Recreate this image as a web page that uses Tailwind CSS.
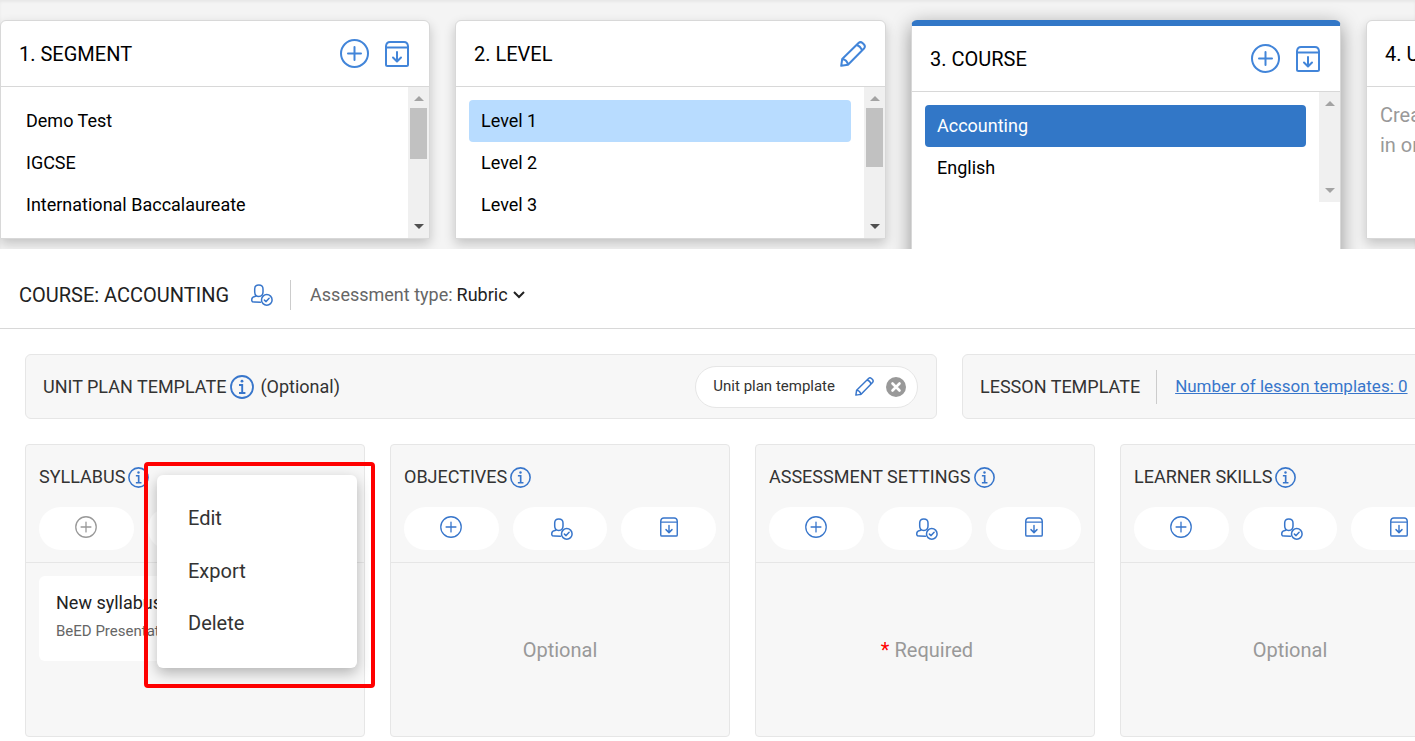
<!DOCTYPE html>
<html lang="en">
<head>
<meta charset="utf-8">
<title>Course: Accounting</title>
<script src="https://cdn.jsdelivr.net/npm/@tailwindcss/browser@4"></script>
</head>
<body class="min-h-screen overflow-x-hidden bg-white font-['Roboto',sans-serif] text-black">
<svg class="hidden" aria-hidden="true">
  <symbol id="plus" viewBox="0 0 29 29"><g fill="none" stroke="currentColor" stroke-linecap="round"><circle cx="14.5" cy="14.5" r="13.5"/><path d="M14.5 8v13M8 14.5h13"/></g></symbol>
  <symbol id="archive" viewBox="0 0 24 26"><g fill="none" stroke="currentColor" stroke-linecap="round" stroke-linejoin="round"><path d="M1 6.5V23.5Q1 25 2.5 25H21.5Q23 25 23 23.5V6.5ZM1 6.5V5Q1.500 1 5 1H19Q22.500 1 23 5V6.5"/><path d="M12 11v9M8 16.500l4 4 4-4"/></g></symbol>
  <symbol id="pencil" viewBox="0 0 26 26"><g fill="none" stroke="currentColor" stroke-linecap="round" stroke-linejoin="round"><path d="M1.200 24.800L2.200 18 18.500 2Q20.500.2 22.500 2L24 3.500Q25.700 5.500 24 7.500L8 23.800ZM2.200 18Q7 18.500 8 23.800M16.500 4Q20.500 5 22 9.500"/></g></symbol>
  <symbol id="user" viewBox="0 0 22 22"><g fill="none" stroke="currentColor" stroke-width="1.500" stroke-linecap="round" stroke-linejoin="round"><path d="M7.800 1C4.900 1 3.700 2.600 3.700 5V8C3.700 10.500 5 12.400 7.800 12.400S12 10.500 12 8V5C12 2.600 10.800 1 7.800 1ZM4.800 12.200Q1 12.700.800 15V16.800Q1 18 3.500 18.100L9.500 18.300"/><circle cx="15.800" cy="15.900" r="5.300"/><path d="M13.400 16.100l1.700 1.500 3-3.300"/></g></symbol>
  <symbol id="info" viewBox="0 0 24 24"><circle cx="12" cy="12" r="11" fill="none" stroke="currentColor" stroke-width="1.800"/><path d="M9 10h3.200v7.800M9 18h6.400" fill="none" stroke="currentColor" stroke-width="1.900"/><circle cx="12" cy="6.200" r="1.400" fill="currentColor"/></symbol>
  <symbol id="up" viewBox="0 0 10 5"><path d="M0 5L5 0 10 5Z" fill="currentColor"/></symbol>
  <symbol id="down" viewBox="0 0 10 5"><path d="M0 0L5 5 10 0Z" fill="currentColor"/></symbol>
</svg>

<section class="flex h-[249px] gap-[25px] overflow-hidden bg-[#f4f4f4] pt-5 inset-shadow-[0_2px_3px_rgba(0,0,0,0.05)]">
  <article class="h-[219px] w-[430px] shrink-0 rounded-t-md border border-[#d8d8d8] bg-white shadow-[0_5px_12px_rgba(0,0,0,0.2)]">
    <header class="flex h-[66px] items-center justify-between border-b border-[#d8d8d8] pr-5 pl-[18px]">
      <h2 class="text-xl">1. SEGMENT</h2>
      <div class="flex items-center gap-4 text-[#4285d9]">
        <button aria-label="Add segment"><svg class="size-[29px] stroke-2"><use href="#plus"/></svg></button>
        <button aria-label="Import segment"><svg class="h-[26px] w-6 stroke-2"><use href="#archive"/></svg></button>
      </div>
    </header>
    <div class="flex h-[151px]">
      <ul class="flex-1 p-[13px] text-lg">
        <li class="flex h-[42px] items-center px-3">Demo Test</li>
        <li class="flex h-[42px] items-center px-3">IGCSE</li>
        <li class="flex h-[42px] items-center px-3">International Baccalaureate</li>
      </ul>
      <div class="flex w-[21px] flex-col items-center bg-[#f0f0f0] pt-[9px] pb-[9px]">
        <svg class="h-[5px] w-[10px] text-[#a3a3a3]"><use href="#up"/></svg>
        <div class="mt-[7px] h-[51px] w-[17px] bg-[#c1c1c1]"></div>
        <svg class="mt-auto h-[5px] w-[10px] text-[#505050]"><use href="#down"/></svg>
      </div>
    </div>
  </article>

  <article class="h-[219px] w-[431px] shrink-0 rounded-t-md border border-[#d8d8d8] bg-white shadow-[0_5px_12px_rgba(0,0,0,0.2)]">
    <header class="flex h-[66px] items-center justify-between border-b border-[#d8d8d8] pr-[19px] pl-[18px]">
      <h2 class="text-xl">2. LEVEL</h2>
      <button class="text-[#4285d9]" aria-label="Edit level"><svg class="size-[26px] stroke-2"><use href="#pencil"/></svg></button>
    </header>
    <div class="flex h-[151px]">
      <ul class="flex-1 p-[13px] text-lg">
        <li class="flex h-[42px] items-center rounded bg-[#b8dcff] px-3">Level 1</li>
        <li class="flex h-[42px] items-center px-3">Level 2</li>
        <li class="flex h-[42px] items-center px-3">Level 3</li>
      </ul>
      <div class="flex w-[21px] flex-col items-center bg-[#f0f0f0] pt-[9px] pb-[9px]">
        <svg class="h-[5px] w-[10px] text-[#a3a3a3]"><use href="#up"/></svg>
        <div class="mt-[7px] h-[59px] w-[17px] bg-[#c1c1c1]"></div>
        <svg class="mt-auto h-[5px] w-[10px] text-[#505050]"><use href="#down"/></svg>
      </div>
    </div>
  </article>

  <article class="h-[250px] w-[430px] shrink-0 overflow-clip rounded-t-md border-x border-t-6 border-x-[#d8d8d8] border-t-[#3277c7] bg-white shadow-[0_5px_20px_rgba(0,0,0,0.4)]">
    <header class="flex h-[66px] items-center justify-between border-b border-[#d8d8d8] pr-5 pl-[18px]">
      <h2 class="text-xl">3. COURSE</h2>
      <div class="flex items-center gap-4 text-[#4285d9]">
        <button aria-label="Add course"><svg class="size-[29px] stroke-2"><use href="#plus"/></svg></button>
        <button aria-label="Import course"><svg class="h-[26px] w-6 stroke-2"><use href="#archive"/></svg></button>
      </div>
    </header>
    <div class="flex h-[110px]">
      <ul class="flex-1 p-[13px] text-lg">
        <li class="flex h-[42px] items-center rounded bg-[#3277c7] px-3 text-white">Accounting</li>
        <li class="flex h-[42px] items-center px-3">English</li>
      </ul>
      <div class="flex w-[21px] flex-col items-center justify-between bg-[#f0f0f0] py-[9px] text-[#a3a3a3]">
        <svg class="h-[5px] w-[10px]"><use href="#up"/></svg>
        <svg class="h-[5px] w-[10px]"><use href="#down"/></svg>
      </div>
    </div>
  </article>

  <article class="h-[219px] w-[430px] shrink-0 rounded-t-md border border-[#d8d8d8] bg-white shadow-[0_5px_12px_rgba(0,0,0,0.2)]">
    <header class="flex h-[66px] items-center border-b border-[#d8d8d8] px-[18px]"><h2 class="text-xl">4. UNIT</h2></header>
    <p class="p-[13px] text-xl leading-[30px] text-[#999]">Create a course<br>in order</p>
  </article>
</section>

<header class="flex h-20 items-center border-b border-[#d8d8d8] pt-3 pl-[19px]">
  <h1 class="text-xl text-[#222]">COURSE: ACCOUNTING</h1>
  <button class="ml-[22px] text-[#3876cb]" aria-label="Course users"><svg class="size-[22px]"><use href="#user"/></svg></button>
  <span class="ml-[17px] h-[30px] w-px bg-[#ccc]"></span>
  <label for="atype" class="ml-[19px] text-lg text-[#666]">Assessment type:</label>
  <div class="relative ml-1 flex items-center">
    <select id="atype" class="w-[68px] appearance-none bg-transparent text-lg text-[#222]"><option>Rubric</option></select>
    <svg class="pointer-events-none absolute right-0 h-[8px] w-3 text-[#222]" viewBox="0 0 12 8" fill="none" stroke="currentColor" stroke-width="2"><path d="M1 1l5 5 5-5"/></svg>
  </div>
</header>

<main class="overflow-hidden py-[25px] pl-[25px] text-[#333]">
  <div class="flex gap-[25px]">
    <section class="flex h-[65px] w-[912px] shrink-0 items-center rounded-md border border-[#e6e6e6] bg-[#f7f7f7] pr-[18px] pl-[17px] text-lg">
      <h2>UNIT PLAN TEMPLATE</h2>
      <button class="ml-1 text-[#3876cb]" aria-label="About unit plan templates"><svg class="size-6"><use href="#info"/></svg></button>
      <span class="ml-[6px]">(Optional)</span>
      <div class="ml-auto flex h-[42px] items-center rounded-full border border-[#e6e6e6] bg-white pr-[11px] pl-[17px]">
        <span class="text-[15px]">Unit plan template</span>
        <button class="ml-5 text-[#3876cb]" aria-label="Edit template"><svg class="size-[19px]" stroke-width="2"><use href="#pencil"/></svg></button>
        <button class="ml-3" aria-label="Remove template"><svg class="size-5" viewBox="0 0 20 20"><circle cx="10" cy="10" r="10" fill="#999"/><path d="M6.500 6.500l7 7M13.500 6.500l-7 7" stroke="#fff" stroke-width="2.600" stroke-linecap="round"/></svg></button>
      </div>
    </section>
    <section class="flex h-[65px] w-[912px] shrink-0 items-center rounded-md border border-[#e6e6e6] bg-[#f7f7f7] px-[17px] text-lg">
      <h2>LESSON TEMPLATE</h2>
      <span class="mr-[18px] ml-4 h-[34px] w-px bg-[#ccc]"></span>
      <a href="#lessons" class="text-[17px] text-[#3876cb] underline">Number of lesson templates: 0</a>
    </section>
  </div>

  <div class="mt-[25px] flex gap-[25px]">
    <section class="relative flex h-[293px] w-[340px] shrink-0 flex-col rounded border border-[#e6e6e6] bg-[#f7f7f7]">
      <header class="h-[118px] border-b border-[#e6e6e6] px-[13px] pt-[18px]">
        <div class="flex h-7 items-center gap-[3px]"><h3 class="text-lg">SYLLABUS</h3><button class="text-[#3876cb]" aria-label="About syllabus"><svg class="size-[21px]"><use href="#info"/></svg></button></div>
        <div class="mt-4 grid grid-cols-3 gap-[14px]">
          <button class="flex h-[43px] items-center justify-center rounded-full bg-white pb-1 text-[#999]" aria-label="Add syllabus"><svg class="size-[22px]" stroke-width="1.700"><use href="#plus"/></svg></button>
          <button class="h-[43px] rounded-full bg-white" aria-label="Syllabus users"></button>
          <button class="h-[43px] rounded-full bg-white" aria-label="Import syllabus"></button>
        </div>
      </header>
      <div class="p-[13px]">
        <article class="h-[85px] rounded-md bg-white px-[17px] pt-[13px]">
          <h4 class="text-lg text-[#222]">New syllabus</h4>
          <p class="mt-1 text-[15px] leading-5 text-[#666]">BeED Presentation</p>
        </article>
      </div>
      <div class="absolute top-[17px] left-[118px] z-10 h-[226px] w-[231px] rounded-sm border-4 border-[#ff0000]">
        <div class="mt-[9px] ml-[9px] flex h-[193px] w-[200px] flex-col rounded-md bg-white py-[17px] text-xl shadow-[0_5px_14px_rgba(0,0,0,0.28)]">
          <button class="h-[52px] px-[31px] text-left">Edit</button>
          <button class="h-[53px] px-[31px] text-left">Export</button>
          <button class="h-[52px] px-[31px] text-left">Delete</button>
        </div>
      </div>
    </section>

    <section class="flex h-[293px] w-[340px] shrink-0 flex-col rounded border border-[#e6e6e6] bg-[#f7f7f7]">
      <header class="h-[118px] border-b border-[#e6e6e6] px-[13px] pt-[18px]">
        <div class="flex h-7 items-center gap-[3px]"><h3 class="text-lg">OBJECTIVES</h3><button class="text-[#3876cb]" aria-label="About objectives"><svg class="size-[21px]"><use href="#info"/></svg></button></div>
        <div class="mt-4 grid grid-cols-3 gap-[14px] text-[#3876cb]">
          <button class="flex h-[43px] items-center justify-center rounded-full bg-white pb-1" aria-label="Add objective"><svg class="size-[22px]" stroke-width="1.700"><use href="#plus"/></svg></button>
          <button class="flex h-[43px] items-center justify-center rounded-full bg-white pl-1" aria-label="Objective users"><svg class="size-[22px]"><use href="#user"/></svg></button>
          <button class="flex h-[43px] items-center justify-center rounded-full bg-white pb-1" aria-label="Import objectives"><svg class="h-5 w-[18px]" stroke-width="1.900"><use href="#archive"/></svg></button>
        </div>
      </header>
      <p class="flex flex-1 items-center justify-center text-xl text-[#999]">Optional</p>
    </section>

    <section class="flex h-[293px] w-[340px] shrink-0 flex-col rounded border border-[#e6e6e6] bg-[#f7f7f7]">
      <header class="h-[118px] border-b border-[#e6e6e6] px-[13px] pt-[18px]">
        <div class="flex h-7 items-center gap-[3px]"><h3 class="text-lg">ASSESSMENT SETTINGS</h3><button class="text-[#3876cb]" aria-label="About assessment settings"><svg class="size-[21px]"><use href="#info"/></svg></button></div>
        <div class="mt-4 grid grid-cols-3 gap-[14px] text-[#3876cb]">
          <button class="flex h-[43px] items-center justify-center rounded-full bg-white pb-1" aria-label="Add assessment setting"><svg class="size-[22px]" stroke-width="1.700"><use href="#plus"/></svg></button>
          <button class="flex h-[43px] items-center justify-center rounded-full bg-white pl-1" aria-label="Assessment users"><svg class="size-[22px]"><use href="#user"/></svg></button>
          <button class="flex h-[43px] items-center justify-center rounded-full bg-white pb-1" aria-label="Import assessment settings"><svg class="h-5 w-[18px]" stroke-width="1.900"><use href="#archive"/></svg></button>
        </div>
      </header>
      <p class="flex flex-1 items-center justify-center gap-[5px] pl-1 text-xl text-[#999]"><span class="text-[#ff0000]">*</span>Required</p>
    </section>

    <section class="flex h-[293px] w-[340px] shrink-0 flex-col rounded border border-[#e6e6e6] bg-[#f7f7f7]">
      <header class="h-[118px] border-b border-[#e6e6e6] px-[13px] pt-[18px]">
        <div class="flex h-7 items-center gap-[3px]"><h3 class="text-lg">LEARNER SKILLS</h3><button class="text-[#3876cb]" aria-label="About learner skills"><svg class="size-[21px]"><use href="#info"/></svg></button></div>
        <div class="mt-4 grid grid-cols-3 gap-[14px] text-[#3876cb]">
          <button class="flex h-[43px] items-center justify-center rounded-full bg-white pb-1" aria-label="Add learner skill"><svg class="size-[22px]" stroke-width="1.700"><use href="#plus"/></svg></button>
          <button class="flex h-[43px] items-center justify-center rounded-full bg-white pl-1" aria-label="Learner skill users"><svg class="size-[22px]"><use href="#user"/></svg></button>
          <button class="flex h-[43px] items-center justify-center rounded-full bg-white pb-1" aria-label="Import learner skills"><svg class="h-5 w-[18px]" stroke-width="1.900"><use href="#archive"/></svg></button>
        </div>
      </header>
      <p class="flex flex-1 items-center justify-center text-xl text-[#999]">Optional</p>
    </section>
  </div>
</main>
</body>
</html>
